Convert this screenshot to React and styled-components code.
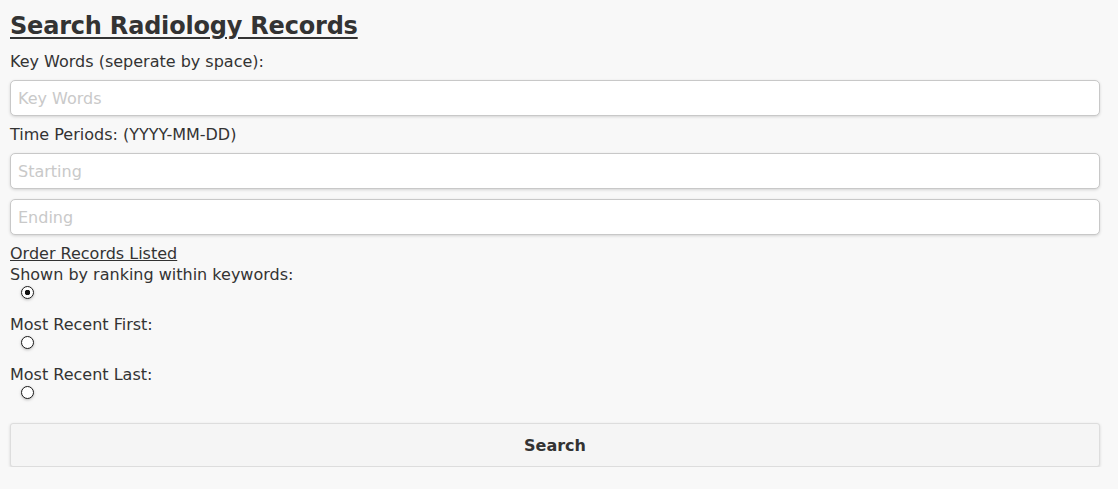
import styled, { createGlobalStyle } from "styled-components";

const Global = createGlobalStyle`
body {
  margin: 0;
  background: #f8f8f8;
  font-family: "DejaVu Sans", sans-serif;
  color: #333;
}
`;

export default function App() {
  return (
    <>
      <Global />
      <Form onSubmit={(e) => e.preventDefault()}>
        <Title>Search Radiology Records</Title>
        <Label>Key Words (seperate by space):</Label>
        <TextInput placeholder="Key Words" />
        <Label>Time Periods: (YYYY-MM-DD)</Label>
        <TextInput placeholder="Starting" $gap={10} />
        <TextInput placeholder="Ending" />
        <SubTitle>Order Records Listed</SubTitle>
        <Option>
          Shown by ranking within keywords:
          <Radio type="radio" name="order" defaultChecked />
        </Option>
        <Option>
          Most Recent First:
          <Radio type="radio" name="order" />
        </Option>
        <Option>
          Most Recent Last:
          <Radio type="radio" name="order" />
        </Option>
        <Button type="submit">Search</Button>
      </Form>
    </>
  );
}

const Form = styled.form`
display: flex;
flex-direction: column;
padding: 0 18px 0 10px;
`;

const Title = styled.h1`
margin: 11px 0 10px;
font-size: 24px;
font-weight: 700;
letter-spacing: -0.2px;
text-decoration: underline;
text-underline-offset: 3px;
line-height: 30px;
`;

const Label = styled.div`
font-size: 16px;
line-height: 21px;
margin-bottom: 8px;
`;

const TextInput = styled.input`
height: 36px;
box-sizing: border-box;
margin-bottom: ${(p) => p.$gap || 8}px;
padding: 0 7px;
border: 1px solid #c8c8c8;
border-radius: 5px;
background: #fff;
box-shadow: 0 1px 3px rgba(0, 0, 0, 0.15);
font-family: "DejaVu Sans", sans-serif;
font-size: 16px;
color: #333;
outline: none;
&::placeholder {
  color: #c9c9c9;
}
`;

const SubTitle = styled.div`
font-size: 16px;
line-height: 21px;
text-decoration: underline;
`;

const Option = styled.label`
display: flex;
flex-direction: column;
align-items: flex-start;
font-size: 16px;
line-height: 21px;
margin-bottom: 15px;
`;

const Radio = styled.input`
appearance: none;
width: 13px;
height: 13px;
margin: 1px 0 0 11px;
border: 1px solid #1a1a1a;
border-radius: 50%;
background: #fff;
box-shadow: 0 1px 3px rgba(0, 0, 0, 0.25);
&:checked {
  background: radial-gradient(circle, #111 0 2.5px, #fff 3px);
}
`;

const Button = styled.button`
margin-top: 9px;
height: 44px;
border: 1px solid #ddd;
border-radius: 3px;
background: #f5f5f5;
box-shadow: 0 1px 3px rgba(0, 0, 0, 0.15);
font-family: "DejaVu Sans", sans-serif;
font-size: 16px;
font-weight: 700;
color: #333;
`;
